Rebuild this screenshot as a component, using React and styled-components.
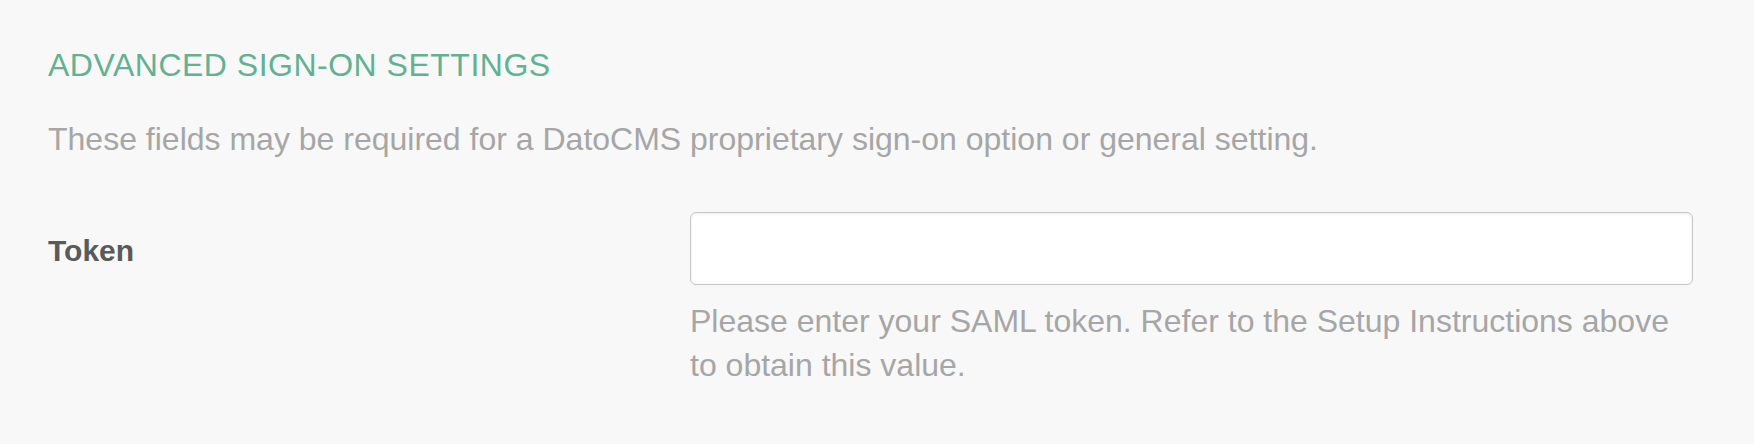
import React, { useState } from "react";
import styled, { createGlobalStyle } from "styled-components";

export default function App() {
  const [token, setToken] = useState("");

  return (
    <Page>
      <GlobalStyle />
      <SectionTitle>Advanced Sign-On Settings</SectionTitle>
      <Description>
        These fields may be required for a DatoCMS proprietary sign-on option
        or general setting.
      </Description>
      <FieldRow>
        <Label htmlFor="saml-token">Token</Label>
        <FieldControl>
          <TextInput
            id="saml-token"
            type="text"
            value={token}
            onChange={(e) => setToken(e.target.value)}
          />
          <Hint>
            Please enter your SAML token. Refer to the Setup Instructions above
            to obtain this value.
          </Hint>
        </FieldControl>
      </FieldRow>
    </Page>
  );
}

const GlobalStyle = createGlobalStyle`
  html, body {
    margin: 0;
    padding: 0;
    background: #f8f8f8;
  }
  body {
    font-family: "Liberation Sans", Arial, sans-serif;
  }
`;

const Page = styled.div`
  min-height: 444px;
  box-sizing: border-box;
  padding: 45px 61px 0 48px;
  background: #f8f8f8;
`;

const SectionTitle = styled.h2`
  margin: 0;
  font-size: 32px;
  line-height: 40px;
  font-weight: 400;
  text-transform: uppercase;
  letter-spacing: 0.5px;
  color: #62b292;
`;

const Description = styled.p`
  margin: 34px 0 0;
  font-size: 32px;
  line-height: 40px;
  color: #a6a6a6;
`;

const FieldRow = styled.div`
  display: grid;
  grid-template-columns: 642px 1fr;
  margin-top: 53px;
`;

const Label = styled.label`
  padding-top: 2px;
  font-size: 30px;
  line-height: 73px;
  font-weight: 700;
  color: #5a5a5a;
`;

const FieldControl = styled.div`
  display: flex;
  flex-direction: column;
`;

const TextInput = styled.input`
  box-sizing: border-box;
  width: 100%;
  height: 73px;
  margin: 0;
  padding: 0 18px;
  border: 1.5px solid #c6c6c6;
  border-radius: 6px;
  background: #fff;
  box-shadow: inset 0 1px 3px rgba(0, 0, 0, 0.08);
  font-family: inherit;
  font-size: 30px;
  color: #333;
  outline: none;
`;

const Hint = styled.p`
  max-width: 990px;
  margin: 14px 0 0;
  font-size: 32px;
  line-height: 44px;
  color: #a6a6a6;
`;
